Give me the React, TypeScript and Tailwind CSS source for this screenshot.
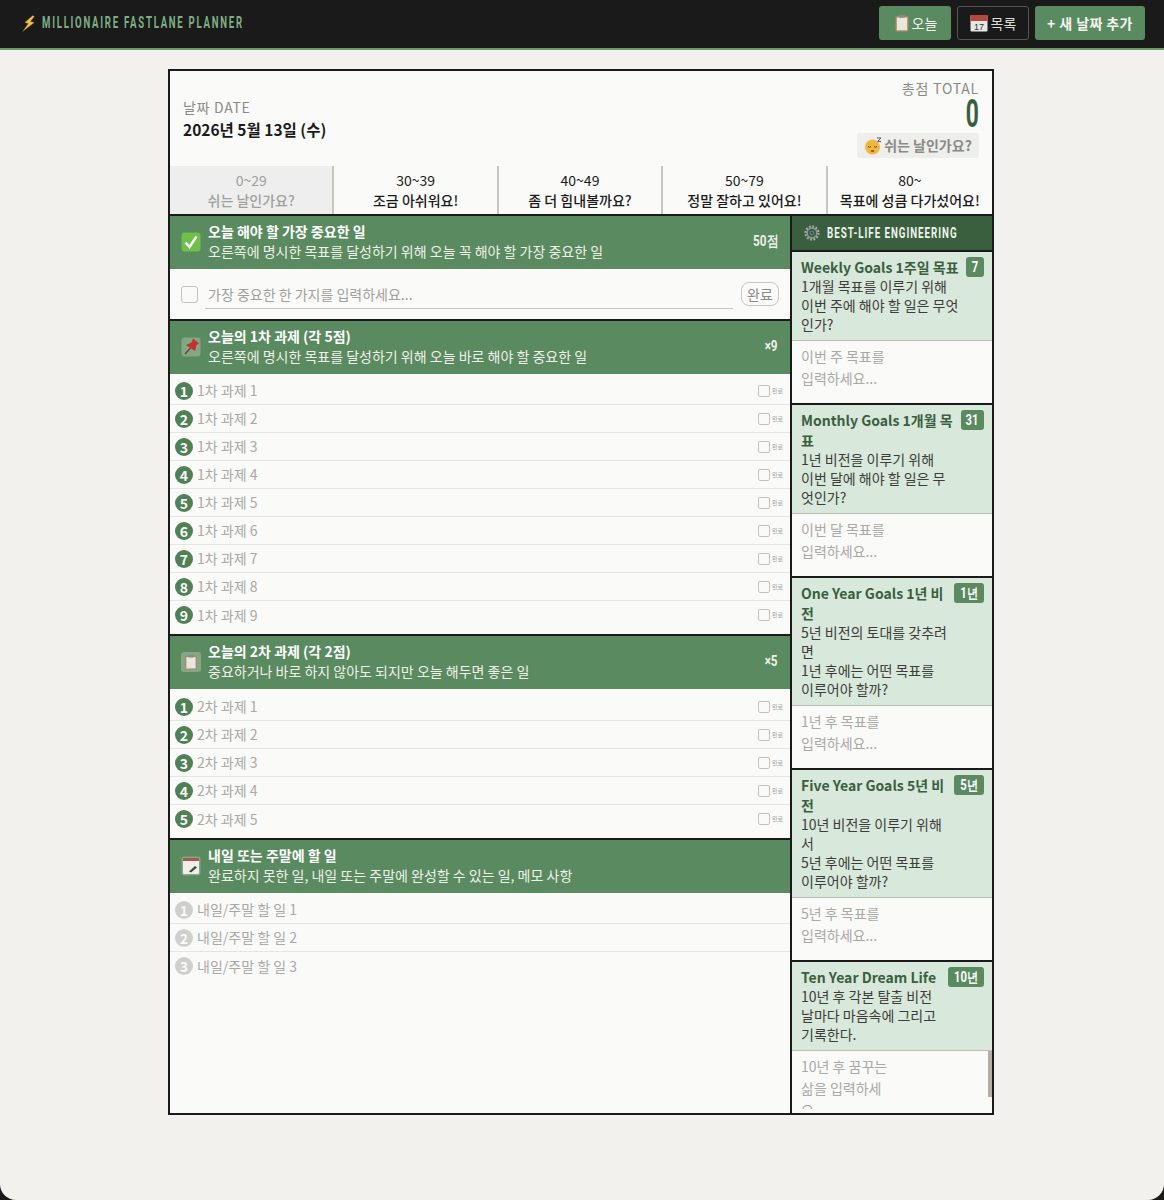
import type { ReactNode } from "react";

const kr = "font-['Noto_Sans_CJK_KR','Noto_Sans',sans-serif]";
const bebas = "font-['Roboto',sans-serif]";

function Bolt() {
  return (
    <svg viewBox="0 0 16 16" className="w-[17px] h-[17px]">
      <path d="M12 0.5 L4.5 7 L7.8 8 L2.5 15.5 L13.5 7 L9.8 6.2 L13.5 1.5 Z" fill="#f2c14e" stroke="#8a6a20" strokeWidth="0.4" />
    </svg>
  );
}

function Clipboard({ className = "w-[18px] h-[18px]" }: { className?: string }) {
  return (
    <svg viewBox="0 0 18 18" className={className}>
      <rect x="2.5" y="2" width="13" height="15.5" rx="1" fill="#a98a62" />
      <rect x="3.8" y="3.5" width="10.4" height="12.8" fill="#e8e6dd" />
      <rect x="6" y="0.8" width="6" height="3" rx="0.8" fill="#8c8c86" />
    </svg>
  );
}

function CalendarIcon() {
  return (
    <svg viewBox="0 0 18 18" className="w-[18px] h-[18px]">
      <rect x="0.5" y="1" width="17" height="16.5" rx="1" fill="#e6e6e6" />
      <rect x="0.5" y="1" width="17" height="6" fill="#b5473f" />
      <text x="9" y="15.5" textAnchor="middle" fontSize="9" fontFamily="Liberation Sans" fill="#333">17</text>
    </svg>
  );
}

function Sleepy() {
  return (
    <svg viewBox="0 0 18 18" className="w-[18px] h-[18px]">
      <circle cx="8.5" cy="10" r="7.5" fill="#f0b63f" />
      <path d="M4 9.5 Q5.5 11 7 9.5 M10 9.5 Q11.5 11 13 9.5" stroke="#6b4a10" strokeWidth="1" fill="none" />
      <ellipse cx="8.5" cy="14" rx="1.8" ry="1.1" fill="#8a5a1a" />
      <path d="M13 1 H17 L13.5 4.5 H17" stroke="#556" strokeWidth="1" fill="none" />
    </svg>
  );
}

function CheckEmoji() {
  return (
    <svg viewBox="0 0 20 20" className="w-[20px] h-[20px]">
      <rect x="0.5" y="0.5" width="19" height="19" rx="3" fill="#6fbf4a" />
      <path d="M4.5 10.5 L8.5 15 L15.5 4.5" stroke="#fff" strokeWidth="2.4" fill="none" />
    </svg>
  );
}

function Pin() {
  return (
    <svg viewBox="0 0 20 20" className="w-[20px] h-[20px]">
      <rect x="0.5" y="0.5" width="19" height="19" rx="3" fill="#ffffff" fillOpacity="0.25" />
      <path d="M4 17 L9.5 11" stroke="#7a3030" strokeWidth="1.2" />
      <path d="M12 1.5 L18 6.5 L15.5 8 L14 14 L5 8 L10.5 5.5 Z" fill="#c9302c" />
    </svg>
  );
}

function ClipBox() {
  return (
    <div className="w-[20px] h-[20px] rounded-[3px] bg-white/25 flex items-center justify-center">
      <Clipboard className="w-[16px] h-[16px]" />
    </div>
  );
}

function Memo() {
  return (
    <svg viewBox="0 0 20 20" className="w-[20px] h-[20px]">
      <rect x="0.5" y="0.5" width="19" height="19" rx="3" fill="#ffffff" fillOpacity="0.25" />
      <rect x="2" y="2" width="16" height="16" rx="1" fill="#eeeeea" />
      <rect x="2" y="2" width="16" height="3" fill="#a85a50" />
      <path d="M8 15.5 L14 10 L16 11.5 L10 16.5 Z" fill="#444" />
    </svg>
  );
}

function Gear() {
  return (
    <svg viewBox="0 0 20 20" className="w-[18px] h-[18px] shrink-0">
      <circle cx="10" cy="10" r="7" fill="none" stroke="#a5a9a5" strokeWidth="3" strokeDasharray="2 1.6" />
      <circle cx="10" cy="10" r="5.4" fill="none" stroke="#8d928e" strokeWidth="1.8" />
      <circle cx="10" cy="10" r="2" fill="none" stroke="#5b7f96" strokeWidth="1.2" />
    </svg>
  );
}

function SectionHead({ icon, title, sub, right }: { icon: ReactNode; title: string; sub: string; right?: string }) {
  return (
    <div className="h-[53px] bg-[#5a8a5f] flex items-center pl-[11px] pr-[12px] pb-[2px] shrink-0">
      <div className="w-[20px] h-[20px] mr-[7px] shrink-0">{icon}</div>
      <div className="flex-1 min-w-0 text-white">
        <div className="text-[14px] font-bold leading-[20px]">{title}</div>
        <div className="text-[14px] leading-[21px] text-[#f0f0ea]">{sub}</div>
      </div>
      {right && (
        <div className={`${bebas} origin-right scale-x-[0.78] font-bold text-[15px] text-[#f0f0ea]`}>{right}</div>
      )}
    </div>
  );
}

function Num({ n, muted }: { n: number; muted?: boolean }) {
  return (
    <span className={`w-[18px] h-[18px] rounded-full shrink-0 flex items-center justify-center text-[14px] font-bold leading-none text-[#fafaf8] ${muted ? "bg-[#cfcfcb]" : "bg-[#4f8056]"}`}>
      {n}
    </span>
  );
}

function TaskRow({ n, label, done = true, last }: { n: number; label: string; done?: boolean; last?: boolean }) {
  return (
    <div className={`h-[28px] flex items-center pl-[5px] pr-[7px] ${last ? "" : "border-b border-[#e6e4df]"}`}>
      <Num n={n} muted={!done} />
      <input
        placeholder={label}
        className="flex-1 min-w-0 ml-[4px] bg-transparent outline-none text-[14px] placeholder:text-[#a9a9a6]"
      />
      {done && (
        <>
          <span className="w-[12px] h-[12px] border border-[#c4c2bb] rounded-[2px] mr-[2px]" />
          <span className="text-[6px] text-[#a5a5a2] leading-none">완료</span>
        </>
      )}
    </div>
  );
}

type Goal = { title: string; badge: string; badgeW: string; lines: string[]; hint: string[] };

const goals: Goal[] = [
  { title: "Weekly Goals 1주일 목표", badge: "7", badgeW: "w-[18px]", lines: ["1개월 목표를 이루기 위해", "이번 주에 해야 할 일은 무엇인가?"], hint: ["이번 주 목표를", "입력하세요..."] },
  { title: "Monthly Goals 1개월 목표", badge: "31", badgeW: "w-[23px]", lines: ["1년 비전을 이루기 위해", "이번 달에 해야 할 일은 무엇인가?"], hint: ["이번 달 목표를", "입력하세요..."] },
  { title: "One Year Goals 1년 비전", badge: "1년", badgeW: "w-[30px]", lines: ["5년 비전의 토대를 갖추려면", "1년 후에는 어떤 목표를", "이루어야 할까?"], hint: ["1년 후 목표를", "입력하세요..."] },
  { title: "Five Year Goals 5년 비전", badge: "5년", badgeW: "w-[30px]", lines: ["10년 비전을 이루기 위해서", "5년 후에는 어떤 목표를", "이루어야 할까?"], hint: ["5년 후 목표를", "입력하세요..."] },
];

const tenYear: Goal = { title: "Ten Year Dream Life", badge: "10년", badgeW: "w-[36px]", lines: ["10년 후 각본 탈출 비전", "날마다 마음속에 그리고", "기록한다."], hint: [] };

function GoalHead({ g }: { g: Goal }) {
  return (
    <div className="bg-[#d8e8da] border-b border-[#bdbdb6] flex items-start pl-[9px] pr-[8px] pt-[5px] pb-[6px] gap-[6px] shrink-0">
      <div className="flex-1 min-w-0">
        <div className="text-[14px] font-bold leading-[20px] text-[#3a5f3f]">{g.title}</div>
        {g.lines.map((l) => (
          <div key={l} className="text-[14px] leading-[19px] text-[#3c3c3a]">{l}</div>
        ))}
      </div>
      <span className={`${g.badgeW} h-[20px] shrink-0 rounded-[3px] bg-[#5a8a5f] text-white flex items-center justify-center`}>
        <span className={`${bebas} inline-block scale-x-[0.8] text-[14px] font-bold leading-none whitespace-nowrap`}>{g.badge}</span>
      </span>
    </div>
  );
}

const bands = [
  ["0~29", "쉬는 날인가요?"],
  ["30~39", "조금 아쉬워요!"],
  ["40~49", "좀 더 힘내볼까요?"],
  ["50~79", "정말 잘하고 있어요!"],
  ["80~", "목표에 성큼 다가섰어요!"],
];

export default function App() {
  return (
    <div className="bg-[#1a1a1a]">
      <div className={`${kr} min-h-[1200px] bg-[#f3f1ed] rounded-b-[16px] overflow-hidden text-[#1a1a1a]`}>
        <header className="h-[50px] bg-[#1a1a1a] border-b-2 border-[#6b9a70] flex items-center justify-between pl-[20px] pr-[19px] pb-[2px]">
          <div className="flex items-center gap-[5px]">
            <Bolt />
            <span className={`${bebas} inline-block origin-left scale-x-[0.6] text-[16px] font-bold tracking-[2.9px] text-[#7fae84] whitespace-nowrap`}>MILLIONAIRE FASTLANE PLANNER</span>
          </div>
          <div className="flex items-center gap-[6px]">
            <button className="h-[34px] w-[72px] rounded-[3px] bg-[#5a8a5f] text-[#f5f5f0] text-[14px] flex items-center justify-center gap-[1px]">
              <Clipboard />오늘
            </button>
            <button className="h-[34px] w-[72px] rounded-[3px] border border-[#555] text-[#dddcd6] text-[14px] flex items-center justify-center gap-[3px]">
              <CalendarIcon />목록
            </button>
            <button className="h-[34px] w-[110px] rounded-[3px] bg-[#5a8a5f] text-[#f5f5f0] text-[14px] font-bold tracking-[0.4px]">+ 새 날짜 추가</button>
          </div>
        </header>

        <div className="flex justify-center pt-[19px] pr-[2px]">
          <div className="w-[826px] h-[1046px] border-2 border-[#1a1a1a] bg-[#fafaf8] flex flex-col">
            <div className="h-[95px] flex items-start justify-between px-[13px] shrink-0">
              <div className="pt-[26px]">
                <div className="text-[14px] leading-[20px] text-[#8a8a86] tracking-[0.7px]">날짜 DATE</div>
                <div className="text-[15.5px] font-bold leading-[24px]">2026년 5월 13일 (수)</div>
              </div>
              <div className="pt-[7px] flex flex-col items-end">
                <div className="text-[14px] leading-[20px] text-[#8a8a86] tracking-[0.8px]">총점 TOTAL</div>
                <div className={`${bebas} origin-right scale-x-[0.6] text-[38px] font-bold leading-[32px] text-[#3a5f3f]`}>0</div>
                <div className="mt-[3px] h-[25px] w-[122px] bg-[#eeeeec] rounded-[2px] flex items-center justify-center gap-[2px] text-[14px] font-bold text-[#8a8a86]">
                  <Sleepy />쉬는 날인가요?
                </div>
              </div>
            </div>

            <div className="h-[50px] grid grid-cols-5 border-b-2 border-[#1a1a1a] shrink-0">
              {bands.map(([range, label], i) => (
                <div
                  key={range}
                  className={`flex flex-col items-center justify-center text-center ${i < 4 ? "border-r-2 border-[#c8c6c0]" : ""} ${i === 0 ? "bg-[#eeeeee] text-[#a0a09c]" : "text-[#1a1a1a]"}`}
                >
                  <div className="text-[14px] leading-[19px]">{range}</div>
                  <div className="text-[14px] font-medium leading-[20px] whitespace-nowrap">{label}</div>
                </div>
              ))}
            </div>

            <div className="flex-1 min-h-0 flex">
              <div className="w-[620px] flex flex-col border-r-2 border-[#1a1a1a] shrink-0 box-content">
                <SectionHead icon={<CheckEmoji />} title="오늘 해야 할 가장 중요한 일" sub="오른쪽에 명시한 목표를 달성하기 위해 오늘 꼭 해야 할 가장 중요한 일" right="50점" />
                <div className="h-[52px] flex items-center pl-[11px] pr-[11px] border-b-2 border-[#1a1a1a] shrink-0">
                  <span className="w-[17px] h-[17px] rounded-[3px] border border-[#c4c2bb] shrink-0" />
                  <input
                    placeholder="가장 중요한 한 가지를 입력하세요..."
                    className="w-[528px] h-[30px] ml-[7px] pl-[3px] bg-transparent outline-none border-b-[1.5px] border-[#c8c6c0] text-[14px] placeholder:text-[#a0a09c]"
                  />
                  <span className="ml-[8px] w-[38px] h-[24px] rounded-[8px] border-[1.5px] border-[#c8c6c0] text-[14px] text-[#8a8a86] flex items-center justify-center">완료</span>
                </div>

                <SectionHead icon={<Pin />} title="오늘의 1차 과제 (각 5점)" sub="오른쪽에 명시한 목표를 달성하기 위해 오늘 바로 해야 할 중요한 일" right="×9" />
                <div className="pt-[3px] pb-[5px] border-b-2 border-[#1a1a1a] shrink-0">
                  {[1, 2, 3, 4, 5, 6, 7, 8, 9].map((n) => (
                    <TaskRow key={n} n={n} label={`1차 과제 ${n}`} last={n === 9} />
                  ))}
                </div>

                <SectionHead icon={<ClipBox />} title="오늘의 2차 과제 (각 2점)" sub="중요하거나 바로 하지 않아도 되지만 오늘 해두면 좋은 일" right="×5" />
                <div className="pt-[4px] pb-[5px] border-b-2 border-[#1a1a1a] shrink-0">
                  {[1, 2, 3, 4, 5].map((n) => (
                    <TaskRow key={n} n={n} label={`2차 과제 ${n}`} last={n === 5} />
                  ))}
                </div>

                <SectionHead icon={<Memo />} title="내일 또는 주말에 할 일" sub="완료하지 못한 일, 내일 또는 주말에 완성할 수 있는 일, 메모 사항" />
                <div className="pt-[3px]">
                  {[1, 2, 3].map((n) => (
                    <TaskRow key={n} n={n} label={`내일/주말 할 일 ${n}`} done={false} last={n === 3} />
                  ))}
                </div>
              </div>

              <div className="flex-1 min-w-0 flex flex-col overflow-hidden">
                <div className="h-[34px] bg-[#3a5f3f] border-b-2 border-[#1a1a1a] box-content shrink-0 flex items-center pl-[11px] gap-[6px]">
                  <Gear />
                  <span className={`${bebas} inline-block w-[150px] origin-left scale-x-[0.65] whitespace-nowrap text-[15px] font-bold tracking-[1.5px] text-[#eef3ec]`}>BEST-LIFE ENGINEERING</span>
                </div>
                {goals.map((g) => (
                  <div key={g.title} className="border-b-2 border-[#1a1a1a] shrink-0">
                    <GoalHead g={g} />
                    <div className="h-[62px] pl-[9px] pt-[4px] text-[14px] leading-[22px] text-[#a9a9a6]">
                      {g.hint.map((h) => (
                        <div key={h}>{h}</div>
                      ))}
                    </div>
                  </div>
                ))}
                <GoalHead g={tenYear} />
                <div className="relative flex-1 min-h-0">
                  <div className="h-[58px] overflow-hidden pl-[9px] pt-[4px] text-[14px] leading-[22px] text-[#a9a9a6]">
                    <div>10년 후 꿈꾸는</div>
                    <div>삶을 입력하세</div>
                    <div>요...</div>
                  </div>
                  <span className="absolute right-0 top-0 w-[4px] h-[46px] bg-[#b5ae9f]" />
                </div>
              </div>
            </div>
          </div>
        </div>
      </div>
    </div>
  );
}
